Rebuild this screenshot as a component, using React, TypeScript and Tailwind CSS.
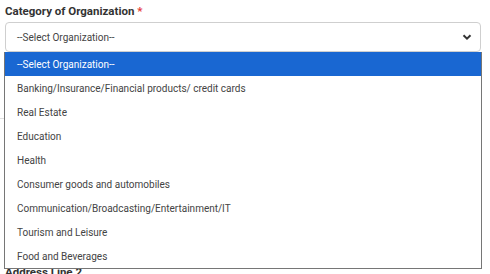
import React from "react";

const items = [
  "Banking/Insurance/Financial products/ credit cards",
  "Real Estate",
  "Education",
  "Health",
  "Consumer goods and automobiles",
  "Communication/Broadcasting/Entertainment/IT",
  "Tourism and Leisure",
  "Food and Beverages",
];

export default function App() {
  return (
    <div
      className="relative w-[490px] h-[274px] overflow-hidden bg-white"
      style={{ fontFamily: "Roboto, 'Liberation Sans', sans-serif" }}
    >
      <div className="flex flex-col pl-[5px] pr-[9px] pt-[3px]">
        <div className="text-[11.5px] font-bold text-[#333] leading-[16px]">
          Category of Organization <span className="text-[#e53935]">*</span>
        </div>
        <div className="mt-[3px] h-[30px] border border-[#cfcfcf] rounded-[4px] flex items-center justify-between pl-[11px] pr-[8px] text-[10px] text-[#444]">
          <span className="pt-[1px]">--Select Organization--</span>
          <svg width="10" height="8" viewBox="0 0 10 8" className="text-[#333]">
            <path d="M1.5 2.2 L5 5.6 L8.5 2.2" fill="none" stroke="currentColor" strokeWidth="2" />
          </svg>
        </div>
        <div className="mt-[66px] h-[30px] border-t border-[#e0e0e0] -ml-[10px]" />
        <div className="mt-[116px] text-[11.5px] font-bold text-[#333] leading-[16px]">Address Line 2</div>
      </div>
      <div className="absolute left-[4px] top-[52px] w-[478px] bg-white border-x border-b border-[#767676]">
        <div className="h-[24px] flex items-center pl-[12px] pt-[1px] bg-[#1967d2] text-white text-[10px]">
          --Select Organization--
        </div>
        {items.map((t) => (
          <div key={t} className="h-[24px] flex items-center pl-[12px] pt-[1px] text-[10px] text-[#444]">
            {t}
          </div>
        ))}
      </div>
    </div>
  );
}
